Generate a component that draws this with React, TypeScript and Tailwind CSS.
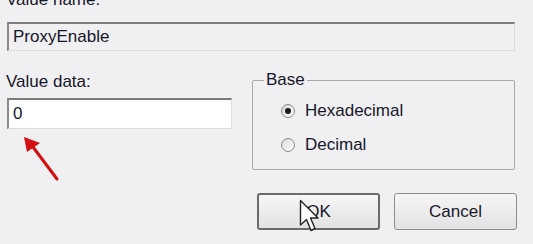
import React from "react";

const Radio = ({ checked, label }: { checked?: boolean; label: string }) => (
  <div className="flex items-center h-[20px]">
    <div className="w-[14px] h-[14px] rounded-full border border-[#8a8a8a] bg-gradient-to-br from-[#d8d8d8] to-white flex items-center justify-center">
      {checked && <div className="w-[6px] h-[6px] rounded-full bg-[#1a1a1a]" />}
    </div>
    <span className="ml-[10px]">{label}</span>
  </div>
);

const Button = ({ label, isDefault }: { label: string; isDefault?: boolean }) => (
  <button
    className={
      "w-[123px] h-[37px] rounded-[3px] bg-gradient-to-b from-[#f6f6f6] to-[#e2e2e2] flex items-center justify-center " +
      (isDefault ? "border-2 border-[#6b6b6b]" : "border border-[#8c8c8c]")
    }
  >
    {label}
  </button>
);

const App = () => {
  return (
    <div className="relative w-[533px] h-[244px] overflow-hidden bg-[#f0eff1] text-[17px] text-[#17172a] font-['Liberation_Sans',Arial,sans-serif]">
      <div className="-mt-[10px] h-[20px] leading-[20px] pl-[6px]">Value name:</div>

      <div className="ml-[7px] mt-[12px] w-[508px] h-[29px] border-t-2 border-l-2 border-t-[#7c7c7c] border-l-[#8a8a8a] border-b border-r border-b-[#dcdcdc] border-r-[#dcdcdc] flex items-center pl-[4px]">
        ProxyEnable
      </div>

      <div className="flex items-start mt-[21px]">
        <div className="pl-[6px]">
          <div className="h-[20px] leading-[20px]">Value data:</div>
          <div className="mt-[6px] ml-[1px] w-[225px] h-[31px] bg-white border-t-2 border-l-2 border-t-[#7c7c7c] border-l-[#8a8a8a] border-b border-r border-b-[#dcdcdc] border-r-[#dcdcdc] flex items-center pl-[4px]">
            0
          </div>
        </div>

        <fieldset className="ml-[20px] mt-[-2px] w-[263px] h-[100px] border border-[#a8a8a8] rounded-[2px]">
          <legend className="ml-[11px] px-[2px] h-[20px] leading-[20px]">Base</legend>
          <div className="pl-[28px] mt-[11px]">
            <Radio checked label="Hexadecimal" />
          </div>
          <div className="pl-[28px] mt-[14px]">
            <Radio label="Decimal" />
          </div>
        </fieldset>
      </div>

      <div className="flex justify-end gap-[14px] pr-[16px] mt-[23px]">
        <Button label="OK" isDefault />
        <Button label="Cancel" />
      </div>

      {/* red arrow */}
      <svg className="absolute left-[18px] top-[130px]" width="45" height="55" viewBox="0 0 45 55">
        <line x1="39" y1="49" x2="12" y2="13" stroke="#d40f0f" strokeWidth="3" strokeLinecap="round" />
        <polygon points="6,7 22,13 9,22" fill="#d40f0f" />
      </svg>

      {/* mouse cursor */}
      <svg className="absolute left-[299px] top-[199px]" width="22" height="36" viewBox="0 0 22 36">
        <path d="M1.5 1.5 L1.5 26 L7.5 20.5 L12 31.5 L16 29.5 L11.5 19 L19 19 Z" fill="white" stroke="#222" strokeWidth="1.4" strokeLinejoin="round" />
      </svg>
    </div>
  );
};

export default App;
